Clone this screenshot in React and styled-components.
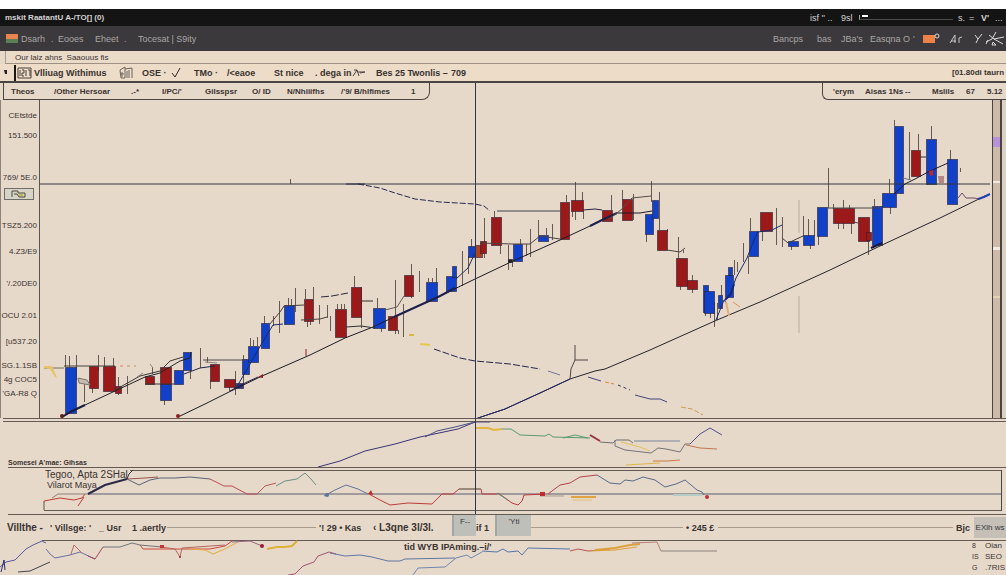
import React from "react";
import styled, { createGlobalStyle } from "styled-components";

const GlobalStyle = createGlobalStyle`
  body {
    margin: 0;
    background: #e7d9ca;
    color: #3a3230;
    font-family: "Liberation Sans", Arial, sans-serif;
    font-size: 9px;
  }

  * {
    box-sizing: border-box;
  }
`;

const Page = styled.div`
  display: flex;
  flex-direction: column;
  border-top: 9px solid #ffffff;
  overflow: hidden;
`;

const Bar = styled.div`
  display: flex;
  align-items: center;
  justify-content: space-between;
  white-space: nowrap;
`;

const Group = styled.div`
  display: flex;
  align-items: center;
  align-self: stretch;
`;

const TitleBar = styled(Bar)`
  height: 17px;
  padding-left: 5px;
  background: #141415;
  color: #d4d2d2;
`;

const Title = styled.h1`
  margin: 0;
  font-size: 8px;
`;

const MenuBar = styled(Bar)`
  height: 25px;
  padding-left: 6px;
  background: #3b393b;
`;

const TabStrip = styled(Bar)`
  height: 13px;
  margin-left: 5px;
  padding-left: 9px;
  border-left: 1px solid #ab9c8d;
  border-bottom: 1px solid #9f9183;
  background: #eadbc9;
  font-size: 8px;
`;

const ToolBar = styled(Bar)`
  height: 19px;
  padding-left: 4px;
  border-bottom: 2px solid #4a4543;
  background: #ecdcc8;
`;

const ToolGroup = styled(Group)`
  margin: 1px 0 0 7px;
  padding-left: 2px;
  border-left: 2px solid #191616;
`;

// $w is the slot the item occupies, text starts on its left edge
const Item = styled.button`
  flex: 0 0 ${(p) => p.$w}px;
  min-width: 0;
  padding: 0;
  border: 0;
  background: none;
  color: inherit;
  font: inherit;
  font-size: ${(p) => p.$size || 9}px;
  font-weight: ${(p) => (p.$bold ? "bold" : "normal")};
  text-align: left;
  white-space: nowrap;
`;

const MenuItem = styled(Item)`
  color: #aaa6a6;
`;

const Note = styled.span`
  flex: 0 0 ${(p) => p.$w}px;
`;

const Icon = styled.svg`
  display: block;
  flex: none;
  overflow: visible;
`;

const TitleRule = styled.span`
  width: 94px;
  height: 5px;
  margin: 0 5px;
  border-left: 1px solid #aaa;
  border-bottom: 1px solid #4d4b4b;
`;

const Workspace = styled.main`
  position: relative;
`;

const Crosshair = styled.div`
  position: absolute;
  top: 0;
  bottom: 61px;
  left: 47.2%;
  width: 1px;
  background: #303547;
  pointer-events: none;
`;

const TabRow = styled(Bar)`
  height: 17px;
  padding-left: 3px;
`;

const LeftTabs = styled(Group)`
  padding-left: 7px;
  width: 427px;
  border: solid #4a4543;
  border-width: 0 1px 1px 1px;
  border-radius: 0 0 8px 0;
`;

const RightTabs = styled(Group)`
  width: 184px;
  padding-left: 10px;
  border: solid #4a4543;
  border-width: 0 0 1px 1px;
  border-radius: 0 0 0 6px;
`;

const ChartRow = styled.section`
  display: flex;
  height: 318px;
`;

const Axis = styled.div`
  display: flex;
  flex-direction: column;
  align-items: flex-end;
  flex: 0 0 40px;
  min-width: 0;
  padding-right: 2px;
  border-left: 1px solid #8d837b;
  border-right: 1px solid #5c5551;
`;

const Tick = styled.span`
  margin-top: ${(p) => p.$gap}px;
  line-height: 12px;
  font-size: 8px;
  white-space: nowrap;
`;

const PriceTag = styled.button`
  display: flex;
  align-items: center;
  justify-content: center;
  width: 30px;
  height: 12px;
  margin: 4px 3px 0 0;
  padding: 0;
  border: 1px solid #6f6d68;
  background: #d6d5c8;
`;

const Plot = styled.svg`
  display: block;
  flex: 1;
  min-width: 0;
  width: 100%;
  height: 100%;
`;

const Rail = styled.div`
  display: flex;
  flex-direction: column;
  flex: 0 0 10px;
  border: solid #4a4543;
  border-width: 0 2px 0 1px;
  background: #cdbaa8;
`;

const RailMark = styled.span`
  height: ${(p) => p.$h}px;
  margin-top: ${(p) => p.$gap}px;
  background: ${(p) => p.$color};
`;

const RailEdge = styled.div`
  flex: 0 0 4px;
  background: #ddd1c2;
`;

const DoubleRule = styled.div`
  height: 4px;
  margin-left: 3px;
  border: solid #645b55;
  border-width: 1px 0;
`;

const Rule = styled.div`
  height: ${(p) => p.$h}px;
  margin-left: 8px;
  border: 0 solid #645b55;
  border-${(p) => p.$side}-width: 1px;
`;

const Panel = styled.section`
  display: grid;
  height: ${(p) => p.$h}px;
  margin-right: ${(p) => (p.$framed ? 4 : 0)}px;
  border-right: ${(p) => (p.$framed ? "1px solid #4a4543" : "0")};

  > * {
    grid-area: 1 / 1;
  }
`;

const Caption = styled.h2`
  margin: 0;
  align-self: end;
  padding-left: 8px;
  font-size: 7px;
  line-height: 8px;
`;

const Legend = styled.div`
  padding-left: 45px;
  font-size: 10px;
  line-height: 10px;

  small {
    padding-left: 2px;
    font-size: 9px;
  }
`;

const StatusBar = styled(Bar)`
  height: 25px;
  padding-left: 7px;
`;

const StatusLine = styled.span`
  flex: ${(p) => (p.$w ? `0 0 ${p.$w}px` : 1)};
  height: 1px;
  margin-right: 3px;
  background: #a89b8e;
`;

const Chip = styled.button`
  flex: 0 0 ${(p) => p.$w}px;
  align-self: flex-start;
  height: 21px;
  padding: 0 0 8px;
  border: 0;
  border-left: 2px solid #a5a5a1;
  background: #bfbfba;
  color: #38383a;
  font: inherit;
  font-size: 8px;
`;

const EndChip = styled(Chip)`
  align-self: center;
  padding: 0;
  border: 0;
  background: #c5bfb8;
`;

const BottomCaption = styled.p`
  margin: 0;
  padding-left: 404px;
  font-size: 9px;
  font-weight: bold;
  line-height: 14px;
`;

const SideList = styled.ul`
  justify-self: end;
  width: 34px;
  margin: 0;
  padding: 0;
  list-style: none;
  font-size: 8px;
  line-height: 11px;
  white-space: nowrap;

  li {
    display: flex;
  }
`;

const SideKey = styled.span`
  flex: 0 0 13px;
  font-size: 7px;
`;

const BLUE = "#1141c9";
const RED = "#9b1a19";

// x, width, top, bottom, colour
const candles = [
  [65, 11, 367, 413, BLUE],
  [89, 9, 366, 388, RED],
  [103, 12, 366, 391, RED],
  [115, 6, 386, 393, RED],
  [145, 9, 376, 384, RED],
  [160, 11, 367, 384, RED],
  [160, 11, 384, 400, BLUE],
  [174, 9, 370, 384, BLUE],
  [183, 8, 352, 370, BLUE],
  [210, 9, 364, 381, RED],
  [224, 11, 379, 387, RED],
  [236, 7, 383, 388, "#2e3689"],
  [242, 7, 359, 374, BLUE],
  [248, 10, 346, 362, BLUE],
  [261, 8, 323, 348, BLUE],
  [284, 10, 305, 324, BLUE],
  [304, 9, 299, 321, RED],
  [335, 11, 309, 337, RED],
  [351, 10, 287, 317, RED],
  [373, 12, 308, 328, BLUE],
  [388, 9, 316, 330, RED],
  [404, 9, 275, 296, RED],
  [426, 11, 282, 301, BLUE],
  [446, 10, 276, 291, BLUE],
  [452, 4, 266, 277, BLUE],
  [468, 7, 246, 257, BLUE],
  [475, 7, 245, 257, "#a8441f"],
  [480, 6, 241, 253, RED],
  [491, 10, 217, 245, RED],
  [508, 4, 259, 262, "#222"],
  [513, 9, 244, 261, BLUE],
  [538, 10, 235, 241, BLUE],
  [560, 9, 202, 239, RED],
  [571, 12, 200, 211, RED],
  [602, 10, 210, 221, RED],
  [622, 10, 199, 220, RED],
  [645, 8, 214, 234, BLUE],
  [652, 6, 200, 218, BLUE],
  [657, 10, 230, 250, RED],
  [676, 11, 258, 286, RED],
  [687, 10, 280, 289, RED],
  [703, 5, 285, 312, BLUE],
  [704, 10, 291, 313, BLUE],
  [718, 4, 295, 308, BLUE],
  [725, 8, 275, 297, BLUE],
  [728, 4, 267, 275, BLUE],
  [749, 9, 231, 256, BLUE],
  [760, 12, 212, 231, RED],
  [788, 10, 241, 246, BLUE],
  [803, 11, 235, 245, BLUE],
  [817, 10, 207, 236, BLUE],
  [833, 21, 208, 223, RED],
  [858, 11, 217, 241, RED],
  [866, 5, 232, 240, RED],
  [872, 10, 206, 245, BLUE],
  [882, 14, 193, 207, BLUE],
  [894, 9, 126, 193, BLUE],
  [911, 9, 150, 176, RED],
  [926, 10, 139, 184, BLUE],
  [947, 10, 159, 204, BLUE],
];

// x, top, bottom
const wicks = [
  [65, 355, 367], [69, 356, 367], [76, 355, 380], [84, 382, 402],
  [92, 388, 393], [98, 355, 371], [104, 357, 367], [113, 358, 367],
  [118, 377, 395], [127, 376, 394], [164, 400, 405], [152, 367, 374],
  [190, 370, 379], [200, 348, 368], [207, 357, 363], [210, 380, 389],
  [235, 371, 395], [229, 387, 391], [243, 355, 385], [250, 338, 346],
  [253, 340, 346], [257, 337, 346], [264, 316, 325], [273, 316, 326],
  [279, 301, 333], [288, 298, 306], [291, 299, 306], [295, 288, 312],
  [305, 289, 299], [313, 287, 299], [307, 321, 327], [319, 305, 324],
  [327, 305, 318], [330, 316, 331], [337, 304, 309], [341, 304, 309],
  [344, 304, 309], [354, 276, 287], [361, 287, 328], [377, 298, 308],
  [381, 328, 332], [395, 280, 334], [403, 304, 337], [398, 330, 334],
  [411, 264, 298], [419, 271, 292], [428, 278, 282], [432, 278, 282],
  [436, 268, 284], [462, 251, 286], [471, 239, 248], [468, 256, 274],
  [484, 218, 258], [494, 211, 217], [500, 245, 254], [508, 245, 270],
  [512, 262, 267], [520, 239, 245], [530, 229, 257], [526, 244, 256],
  [538, 220, 235], [546, 228, 235], [552, 224, 240], [566, 195, 202],
  [575, 182, 220], [582, 192, 205], [572, 211, 217], [583, 211, 219],
  [611, 195, 210], [622, 190, 200], [633, 194, 220], [651, 181, 202],
  [659, 192, 230], [646, 234, 242], [667, 229, 232], [678, 237, 259],
  [680, 286, 290], [692, 275, 281], [692, 289, 293], [683, 250, 253],
  [714, 302, 327], [710, 313, 318], [705, 313, 316], [717, 303, 320],
  [721, 285, 300], [734, 260, 275], [737, 262, 272], [743, 243, 262],
  [750, 218, 231], [748, 256, 274], [762, 231, 241], [776, 208, 245],
  [782, 217, 247], [791, 246, 250], [803, 216, 236], [808, 219, 236],
  [814, 220, 236], [810, 245, 249], [818, 236, 245], [828, 168, 208],
  [833, 204, 209], [843, 200, 208], [849, 205, 210], [838, 223, 229],
  [843, 223, 229], [851, 223, 234], [868, 241, 255], [874, 199, 206],
  [889, 179, 193], [890, 207, 214], [894, 120, 126], [909, 132, 180],
  [918, 134, 150], [931, 126, 139], [950, 150, 160], [960, 168, 172],
  [290, 179, 184], [310, 321, 325],
];

// [points, colour, width, dash]
const chartLines = [
  ["40,184 990,184", "#35343a", 1],
  ["64,366 115,366", "#4c403b", 1],
  ["120,366 136,366", "#d18a62", 1, "3 4"],
  ["44,368 64,368", "#776e66", 1],
  ["62,417 85,405 115,391 145,377 160,373 180,361 190,358 191,352", "#22222a", 1],
  ["62,417 72,411 85,405", "#1a1c45", 2],
  ["115,390 140,376 160,371 170,361 183,357", "#3a3635", 1],
  ["145,384 174,384", "#3a3635", 1],
  ["184,374 200,368 215,366", "#20264a", 1],
  ["203,360 246,360", "#4c4643", 1],
  ["178,417 205,404 235,389 262,376 310,355 345,338 373,327 394,317 440,296 475,279 513,261 560,240 590,226 617,213 640,213 652,211", "#1d1b26", 1],
  ["230,391 245,383 258,377", "#20204c", 1],
  ["394,317 440,296 455,288", "#20204c", 2],
  ["590,226 604,219 617,213", "#20204c", 2],
  ["236,388 249,366 258,350 262,343 273,325 283,324", "#182b72", 1],
  ["269,325 280,312 284,306 304,305", "#47403c", 1],
  ["301,320 320,319 327,317", "#47403c", 1],
  ["346,327 361,326 375,328", "#303030", 1],
  ["361,301 373,301", "#303030", 1],
  ["321,297 332,296 348,293", "#2b2938", 1, "8 2"],
  ["385,310 397,307 404,296", "#635952", 1],
  ["456,279 468,268 475,253", "#20315f", 1],
  ["480,243 513,244 530,244 540,236 560,239", "#4a4240", 1],
  ["497,211 560,211", "#42424a", 1],
  ["583,210 595,209 602,210", "#252545", 1],
  ["608,220 622,209 632,198 651,196", "#554d49", 1],
  ["358,184 380,188 395,193 415,199 440,202 475,204 484,206 490,211", "#29294f", 1, "6 2"],
  ["346,184 365,184", "#29294f", 1],
  ["434,349 460,358 475,361 510,364 540,369", "#25254d", 1, "7 2"],
  ["548,371 560,375", "#77749a", 1],
  ["588,377 601,381", "#43437a", 1],
  ["605,382 614,384", "#d58c42", 1, "4 2"],
  ["618,385 630,390", "#30305c", 1, "3 3"],
  ["635,395 650,399 660,399 667,402", "#444477", 1],
  ["681,407 692,409 703,415", "#cf9c50", 1, "5 2"],
  ["409,335 414,335", "#dcb648", 2],
  ["420,344 430,345", "#e6c652", 2],
  ["475,419 505,409 540,393 570,379 595,371 605,369 650,350 717,320 760,302 830,270 880,246 940,218 985,196", "#26232b", 1],
  ["478,418 505,409 540,393 570,379", "#24266b", 1],
  ["575,345 575,360 571,369 570,379", "#4c4642", 1],
  ["575,360 588,360", "#4c4642", 1],
  ["667,250 680,252 685,248", "#4a4240", 1],
  ["725,300 731,292 736,278 747,258 754,240 758,232 772,230 782,225", "#182b72", 1],
  ["725,300 731,294 734,284", "#122a78", 2],
  ["733,302 740,307", "#d39350", 1],
  ["716,320 724,300 727,304", "#182b72", 1],
  ["782,238 788,243 803,236", "#47403c", 1],
  ["828,208 880,208", "#4c4643", 1],
  ["854,222 858,223", "#4c4643", 1],
  ["871,248 882,243", "#181a40", 2],
  ["894,194 905,184 915,179 930,171 948,163", "#1d1b2e", 1],
  ["903,178 911,180", "#777", 1],
  ["920,157 926,157", "#333", 1],
  ["958,198 962,193 966,198 974,198 980,199 985,196", "#6d4b63", 1],
  ["978,199 984,197 990,194", "#2341b3", 2],
  ["799,200 799,233", "#b9aca0", 1],
  ["799,296 799,333", "#b9a99b", 1],
];

const panelOne = [
  ["318,467 340,461 365,451 395,444 420,437 458,429 475,422", "#3a3377", 1],
  ["425,437 437,431 455,427 475,422 490,422", "#4a4f86", 1],
  ["475,428 488,428 494,430 502,429", "#e0b640", 2],
  ["502,429 511,429 520,435 545,436 549,434 553,437 590,438", "#5a9a72", 1],
  ["563,438 575,435 588,438", "#5a9a72", 1],
  ["590,435 600,441", "#943040", 2],
  ["600,442 613,443 616,440 629,440 633,443", "#6d6e70", 1],
  ["634,441 680,441", "#78859c", 1],
  ["621,442 640,447 650,451", "#e2c05b", 1],
  ["615,440 615,446 625,450 651,453 658,448 666,449 680,452 685,444 690,444", "#77737a", 1],
  ["690,444 700,434 710,428 722,435", "#504d92", 1],
  ["686,445 700,448 717,449", "#c07850", 1],
  ["653,461 668,461 680,460", "#d27643", 1],
  ["626,465 660,463", "#dcb648", 1],
];

const panelTwo = [
  ["130,470.5 1001,470.5", "#645b55", 1],
  ["44,510.5 1001,510.5", "#645b55", 1],
  ["88,494 1001,494", "#5a5d70", 1],
  ["44,510 44,501", "#6a4a44", 1],
  ["44,501 60,498 74,500 82,498 85,494", "#c23b34", 1],
  ["78,506 84,497", "#c23b34", 1],
  ["52,498 58,494 88,494", "#8a8078", 1],
  ["88,494 105,485 127,479", "#2c2947", 2],
  ["127,479 145,478 158,477", "#95554f", 1],
  ["127,479 139,485 150,480 160,478 175,478 190,477 210,479", "#5a6277", 1],
  ["127,479 129,474 133,470", "#333", 1],
  ["210,479 224,486 232,486 247,494 257,494", "#bf4a50", 1],
  ["257,494 265,486 276,483", "#b85a58", 1],
  ["276,486 285,481 297,479 305,473 311,479 316,485", "#6b8f83", 1],
  ["324,496 335,490 346,485 358,489 368,494", "#607596", 1],
  ["369,494 380,500 390,505 408,503 432,504 442,494 453,494 459,489 481,489 482,494 497,494", "#bd3b3c", 1],
  ["459,489 481,489", "#5f8d77", 1],
  ["498,493 505,498 512,503 518,505 522,501 524,495 545,494", "#bd3b3c", 1],
  ["497,493 508,500", "#598a78", 1],
  ["548,494 560,485 570,483 580,477 597,475", "#b54349", 1],
  ["597,475 610,483 620,484 625,480 633,481 643,477 655,480 665,487 676,484 685,480 697,490 702,492 704,495", "#586a8b", 1],
  ["540,496 564,496", "#a79b91", 1],
  ["571,497 596,497", "#dfa242", 2],
  ["573,500 592,500", "#e4bf70", 1],
  ["673,495 702,495", "#b5cbc3", 2],
];

const panelThree = [
  ["42,540.5 1006,540.5", "#645b55", 1],
  ["0,567 6,562 15,560 26,549 33,545 42,541 46,543", "#595aa0", 1],
  ["1,572 4,560 5,570", "#26296e", 1],
  ["46,549 50,554 55,558 70,555 80,552 95,559", "#6b6ea4", 1],
  ["71,554 74,545 82,553", "#ba6b66", 1],
  ["88,556 95,559 103,547", "#a4455c", 1],
  ["103,547 120,547 132,543 140,545 162,547", "#72757a", 1],
  ["140,545 143,549 210,549 225,546 232,541", "#cc4939", 1],
  ["162,547 175,549 180,557 182,548 225,545", "#b5655f", 1],
  ["190,549 205,550 213,554 225,549 238,542", "#e4ac42", 1],
  ["232,542 250,541 262,546", "#9a6486", 1],
  ["267,549 277,547 285,547 292,546 297,541", "#ddb038", 2],
  ["18,572 30,571 50,562", "#44424f", 1],
  ["288,575 295,574 303,566 314,562 318,556 329,552 336,554", "#a45474", 1],
  ["330,553 345,556 360,555 372,557 388,561 400,561 405,559 455,558", "#5f77a6", 1],
  ["413,575 418,568 445,567 456,558 467,555 471,558 482,552", "#7087ad", 1],
  ["482,551 497,552 503,549 508,552 518,551 522,555 528,548 570,549", "#5876a8", 1],
  ["570,551 578,549 588,551 610,549", "#b65454", 1],
  ["595,550 615,548 630,545 640,544", "#dca13d", 2],
  ["590,551 615,550 637,547", "#dca13d", 1],
  ["632,543 657,542 661,551", "#b98172", 1],
  ["661,551 717,551", "#8b8378", 1],
];

const axisTicks = [
  ["CEtstde", 10],
  ["151.500", 8],
  ["769/ 5E.0", 30],
  null,
  ["TSZ5.200", 20],
  ["4.Z3/E9", 14],
  ["'/.20DE0", 20],
  ["OCU 2.01", 20],
  ["[u537.20", 14],
  ["SG.1.1SB", 12],
  ["4g COC5", 2],
  ["'GA-R8 Q", 2],
];

const leftTabs = [
  ["Theos", 43],
  ["/Other Hersoar", 77],
  [".-*", 31],
  ["I/PC/'", 43],
  ["Gilsspsr", 47],
  ["O/ ID", 35],
  ["N/Nhiiifhs", 54],
  ["/'9/ B/hlfimes", 70],
  ["1", 10],
];

const rightTabs = [
  ["'erym", 32],
  ["Aisas 1Ns", 40],
  ["--", 27],
  ["Mslils", 34],
  ["67", 21],
  ["5.12", 17],
];

const Lines = ({ data }) =>
  data.map(([points, stroke, width, dash], i) => (
    <polyline
      key={i}
      points={points}
      fill="none"
      stroke={stroke}
      strokeWidth={width}
      strokeDasharray={dash}
    />
  ));

const PriceChart = () => (
  <Plot viewBox="40 100 952 318" preserveAspectRatio="none" aria-label="Price chart">
    {wicks.map(([x, y1, y2], i) => (
      <line key={i} x1={x + 0.5} x2={x + 0.5} y1={y1} y2={y2} stroke="#655a53" />
    ))}
    {candles.map(([x, w, y1, y2, fill], i) => (
      <rect
        key={i}
        x={x + 0.5}
        y={y1 + 0.5}
        width={w}
        height={y2 - y1}
        fill={fill}
        stroke="#2a1c33"
        strokeOpacity="0.6"
      />
    ))}
    <Lines data={chartLines} />
    <path d="M44 366h8l5 12-2-1-5-8-6-1z" fill="#e8c368" />
    <circle cx="62" cy="416" r="2" fill="#5a1a22" />
    <circle cx="178" cy="416" r="2" fill="#8d1f22" />
    <path d="M258 377l5-3v4z" fill="#8d1f22" />
    <path d="M306 349v7" stroke="#8d1f22" />
    <path d="M78 378l9 2 3 5-11-2z" fill="#c8bcb0" stroke="#7d736b" />
    <path d="M137 377l6-4M150 364l3 4M205 362l12 1" stroke="#8c8279" />
    <path d="M929 171l4-1v5l-3 1z" fill="#c92323" />
    <path d="M938 176h6v7h-5z" fill="#b58a86" />
    <path d="M726 302l3 14" stroke="#e0b07a" strokeWidth="2" />
  </Plot>
);

const App = () => {
  return (
    <>
      <GlobalStyle />
      <Page>
        <TitleBar as="header">
          <Title>mskit RaatantU A-/TO[] (0)</Title>
          <Group>
            <Note $w={31}>isf '' ..</Note>
            <Note $w={13}>9sl</Note>
            <TitleRule>
              <Icon width="8" height="3">
                <path d="M2 1h6" stroke="#fff" strokeWidth="2" />
              </Icon>
            </TitleRule>
            <Note $w={11}>s.</Note>
            <Note $w={12}>=</Note>
            <Note $w={14}>
              <b>V'</b>
            </Note>
            <Note $w={11}>...</Note>
          </Group>
        </TitleBar>

        <MenuBar as="nav">
          <Group>
            <Icon width="15" height="9">
              <path d="M0 0h12v5H0z" fill="#e9834f" />
              <path d="M0 5h12v4H0z" fill="#5e7f55" />
            </Icon>
            <MenuItem $w={30}>Dsarh</MenuItem>
            <MenuItem $w={7}>.</MenuItem>
            <MenuItem $w={37}>Eooes</MenuItem>
            <MenuItem $w={29}>Eheet</MenuItem>
            <MenuItem $w={14}>.</MenuItem>
            <MenuItem $w={60}>Tocesat | S9ity</MenuItem>
          </Group>
          <Group>
            <MenuItem $w={44}>Bancps</MenuItem>
            <MenuItem $w={24}>bas</MenuItem>
            <MenuItem $w={29}>JBa's</MenuItem>
            <MenuItem $w={43}>Easqna O</MenuItem>
            <MenuItem $w={10}>'</MenuItem>
            <Icon width="26" height="9">
              <path d="M0 1h12v8H0z" fill="#ee8248" />
              <circle cx="14" cy="2" r="2" fill="none" stroke="#ddd" />
            </Icon>
            <Icon width="25" height="10">
              <path d="M1 9L6 1v8M2 7h5M10 9V4l3-1" fill="none" stroke="#c9c5c5" />
            </Icon>
            <Icon width="32" height="16">
              <path
                d="M1 4l3 4 4-5M4 8l-2 4M12 11l6-3 4-7M15 4l5 4 10-2M20 8l9 5M14 9l-2 4M19 11l-1 3h4z"
                fill="none"
                stroke="#dedada"
              />
            </Icon>
          </Group>
        </MenuBar>

        <TabStrip>Our laiz ahns &nbsp;Saaouus fis</TabStrip>

        <ToolBar>
          <Group>
            <Icon width="3" height="6">
              <path d="M0 0h3v4H1z" fill="#222" />
            </Icon>
            <ToolGroup>
              <Icon width="16" height="12">
                <path d="M0 1h13v10H0zM2 3v6M4 3h2v3H4v3h2M8 3v6M10 3h2v6" fill="none" stroke="#4a433f" />
              </Icon>
              <Item $w={85} $bold>Vlliuag Withimus</Item>
              <Icon width="23" height="14">
                <path
                  d="M1 4l5-3v11H2zM3 6v5M6 3l7-1v10M8 5v7M10 4v8M1 8h4"
                  fill="none"
                  stroke="#6d645d"
                />
              </Icon>
              <Item $w={29} $bold>OSE ·</Item>
              <Icon width="23" height="10">
                <path d="M1 5l3 4 5-9" fill="none" stroke="#2c2725" />
              </Icon>
              <Item $w={33} $bold>TMo ·</Item>
              <Item $w={47} $bold>/&lt;eaoe</Item>
              <Item $w={41} $bold>St nice</Item>
              <Item $w={38} $bold>. dega in</Item>
              <Icon width="23" height="8">
                <path d="M0 7l4-6 2 6M5 3h7l-5 1M1 1h3" fill="none" stroke="#4a433f" />
              </Icon>
              <Item $w={75} $bold>Bes 25 Twonlis –</Item>
              <Item $w={20} $bold>709</Item>
            </ToolGroup>
          </Group>
          <Item $w={54} $size={8} $bold>[01.80di taurn</Item>
        </ToolBar>

        <Workspace>
          <TabRow as="nav">
            <LeftTabs>
              {leftTabs.map(([label, w]) => (
                <Item key={label} $w={w} $size={8} $bold>
                  {label}
                </Item>
              ))}
            </LeftTabs>
            <RightTabs>
              {rightTabs.map(([label, w]) => (
                <Item key={label} $w={w} $size={8} $bold>
                  {label}
                </Item>
              ))}
            </RightTabs>
          </TabRow>

          <ChartRow>
            <Axis>
              {axisTicks.map((tick) =>
                tick ? (
                  <Tick key={tick[0]} $gap={tick[1]}>
                    {tick[0]}
                  </Tick>
                ) : (
                  <PriceTag key="tag" aria-label="Price marker">
                    <Icon width="16" height="8">
                      <path d="M1 7V1h6v2h7v4H8L6 4H3" fill="none" stroke="#4b4a3a" />
                      <path d="M8 4h4v2H8z" fill="#c3b74d" />
                    </Icon>
                  </PriceTag>
                )
              )}
            </Axis>
            <PriceChart />
            <Rail>
              <RailMark $h={10} $gap={37} $color="#b892d8" />
              <RailMark $h={2} $gap={34} $color="#f2eadf" />
              <RailMark $h={3} $gap={64} $color="#f2eadf" />
              <RailMark $h={2} $gap={46} $color="#e6d3b4" />
            </Rail>
            <RailEdge />
          </ChartRow>
          <DoubleRule />

          <Panel $h={45}>
            <Plot viewBox="0 422 1006 45" preserveAspectRatio="none">
              <Lines data={panelOne} />
            </Plot>
            <Caption>Somesei A'mae: Gihsas</Caption>
          </Panel>
          <Rule $h={3} $side="top" />

          <Panel $h={41} $framed>
            <Plot viewBox="0 470 1001 41" preserveAspectRatio="none">
              <Lines data={panelTwo} />
              <path d="M368 494l3-4 2 5zM540 492h5v4h-5z" fill="#c32a2c" />
              <circle cx="707" cy="497" r="2" fill="#b5343a" />
              <circle cx="327" cy="495" r="2" fill="#55779c" />
            </Plot>
            <Legend>
              Tegoo, Apta 2SHal
              <br />
              <small>Vilarot Maya</small>
            </Legend>
          </Panel>
          <Rule $h={4} $side="bottom" />

          <StatusBar as="footer">
            <Item $w={43} $size={10} $bold>Villthe -</Item>
            <Item $w={49} $bold>' Villsge: '</Item>
            <Item $w={33} $bold>_ Usr</Item>
            <Item $w={35} $bold>1 .aertly</Item>
            <StatusLine $w={149} />
            <Item $w={54} $bold>'! 29 • Kas</Item>
            <Item $w={79} $size={10} $bold>‹ L3qne 3l/3l.</Item>
            <Chip $w={24}>F--</Chip>
            <Item $w={19} $bold>if 1</Item>
            <Chip $w={36}>'Yti</Chip>
            <StatusLine />
            <Item $w={32} $bold>• 245 £</Item>
            <StatusLine $w={235} />
            <Item $w={18} $bold>Bjc</Item>
            <EndChip $w={32}>EXlh ws</EndChip>
          </StatusBar>

          <Panel $h={35}>
            <Plot viewBox="0 540 1006 35" preserveAspectRatio="none">
              <Lines data={panelThree} />
              <circle cx="262" cy="546" r="2" fill="#9d1b2d" />
              <circle cx="180" cy="557" r="1" fill="#7c2f38" />
              <path d="M160 545h4v3h-4z" fill="#c5342e" />
            </Plot>
            <BottomCaption>tid WYB IPAming.–i/'</BottomCaption>
            <SideList>
              <li>
                <SideKey>8</SideKey>Oian
              </li>
              <li>
                <SideKey>IS</SideKey>SEO
              </li>
              <li>
                <SideKey>G</SideKey>.7RIS
              </li>
            </SideList>
          </Panel>
          <Crosshair />
        </Workspace>
      </Page>
    </>
  );
};

export default App;
